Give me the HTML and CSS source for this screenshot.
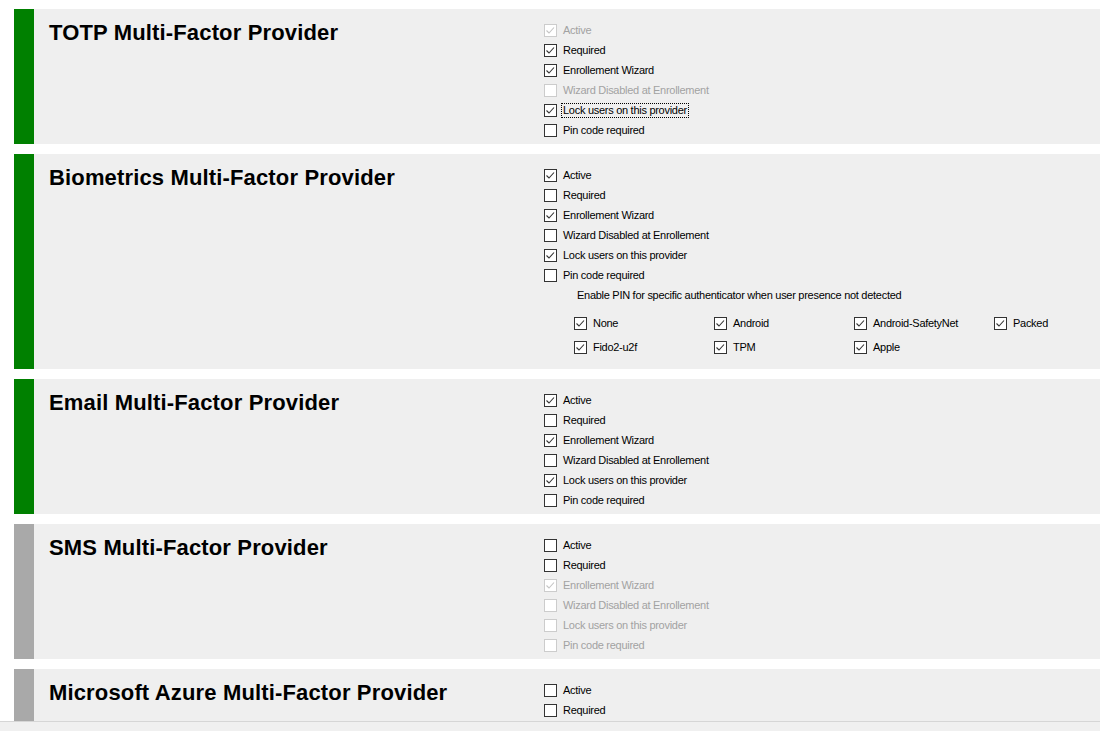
FILE: index.html
```html
<!DOCTYPE html>
<html>
<head>
<meta charset="utf-8">
<link rel="stylesheet" href="styles.css">
</head>
<body>
<div class="page">
  <div class="list">
    <section class="card">
      <div class="stripe on"></div>
      <h2 class="title">TOTP Multi-Factor Provider</h2>
      <div class="options">
        <label class="opt disabled checked"><span class="box"><svg viewBox="0 0 13 13"><polyline points="2.5,6.5 5,9 10,3.5"/></svg></span><span class="txt">Active</span></label>
        <label class="opt checked"><span class="box"><svg viewBox="0 0 13 13"><polyline points="2.5,6.5 5,9 10,3.5"/></svg></span><span class="txt">Required</span></label>
        <label class="opt checked"><span class="box"><svg viewBox="0 0 13 13"><polyline points="2.5,6.5 5,9 10,3.5"/></svg></span><span class="txt">Enrollement Wizard</span></label>
        <label class="opt disabled"><span class="box"></span><span class="txt">Wizard Disabled at Enrollement</span></label>
        <label class="opt checked"><span class="box"><svg viewBox="0 0 13 13"><polyline points="2.5,6.5 5,9 10,3.5"/></svg></span><span class="txt focus">Lock users on this provider</span></label>
        <label class="opt"><span class="box"></span><span class="txt">Pin code required</span></label>
      </div>
    </section>

    <section class="card">
      <div class="stripe on"></div>
      <h2 class="title">Biometrics Multi-Factor Provider</h2>
      <div class="options">
        <label class="opt checked"><span class="box"><svg viewBox="0 0 13 13"><polyline points="2.5,6.5 5,9 10,3.5"/></svg></span><span class="txt">Active</span></label>
        <label class="opt"><span class="box"></span><span class="txt">Required</span></label>
        <label class="opt checked"><span class="box"><svg viewBox="0 0 13 13"><polyline points="2.5,6.5 5,9 10,3.5"/></svg></span><span class="txt">Enrollement Wizard</span></label>
        <label class="opt"><span class="box"></span><span class="txt">Wizard Disabled at Enrollement</span></label>
        <label class="opt checked"><span class="box"><svg viewBox="0 0 13 13"><polyline points="2.5,6.5 5,9 10,3.5"/></svg></span><span class="txt">Lock users on this provider</span></label>
        <label class="opt"><span class="box"></span><span class="txt">Pin code required</span></label>
        <div class="pin-note">Enable PIN for specific authenticator when user presence not detected</div>
        <div class="auth-grid">
          <label class="opt checked"><span class="box"><svg viewBox="0 0 13 13"><polyline points="2.5,6.5 5,9 10,3.5"/></svg></span><span class="txt">None</span></label>
          <label class="opt checked"><span class="box"><svg viewBox="0 0 13 13"><polyline points="2.5,6.5 5,9 10,3.5"/></svg></span><span class="txt">Android</span></label>
          <label class="opt checked"><span class="box"><svg viewBox="0 0 13 13"><polyline points="2.5,6.5 5,9 10,3.5"/></svg></span><span class="txt">Android-SafetyNet</span></label>
          <label class="opt checked"><span class="box"><svg viewBox="0 0 13 13"><polyline points="2.5,6.5 5,9 10,3.5"/></svg></span><span class="txt">Packed</span></label>
          <label class="opt checked"><span class="box"><svg viewBox="0 0 13 13"><polyline points="2.5,6.5 5,9 10,3.5"/></svg></span><span class="txt">Fido2-u2f</span></label>
          <label class="opt checked"><span class="box"><svg viewBox="0 0 13 13"><polyline points="2.5,6.5 5,9 10,3.5"/></svg></span><span class="txt">TPM</span></label>
          <label class="opt checked"><span class="box"><svg viewBox="0 0 13 13"><polyline points="2.5,6.5 5,9 10,3.5"/></svg></span><span class="txt">Apple</span></label>
        </div>
      </div>
    </section>

    <section class="card">
      <div class="stripe on"></div>
      <h2 class="title">Email Multi-Factor Provider</h2>
      <div class="options">
        <label class="opt checked"><span class="box"><svg viewBox="0 0 13 13"><polyline points="2.5,6.5 5,9 10,3.5"/></svg></span><span class="txt">Active</span></label>
        <label class="opt"><span class="box"></span><span class="txt">Required</span></label>
        <label class="opt checked"><span class="box"><svg viewBox="0 0 13 13"><polyline points="2.5,6.5 5,9 10,3.5"/></svg></span><span class="txt">Enrollement Wizard</span></label>
        <label class="opt"><span class="box"></span><span class="txt">Wizard Disabled at Enrollement</span></label>
        <label class="opt checked"><span class="box"><svg viewBox="0 0 13 13"><polyline points="2.5,6.5 5,9 10,3.5"/></svg></span><span class="txt">Lock users on this provider</span></label>
        <label class="opt"><span class="box"></span><span class="txt">Pin code required</span></label>
      </div>
    </section>

    <section class="card">
      <div class="stripe off"></div>
      <h2 class="title">SMS Multi-Factor Provider</h2>
      <div class="options">
        <label class="opt"><span class="box"></span><span class="txt">Active</span></label>
        <label class="opt"><span class="box"></span><span class="txt">Required</span></label>
        <label class="opt disabled checked"><span class="box"><svg viewBox="0 0 13 13"><polyline points="2.5,6.5 5,9 10,3.5"/></svg></span><span class="txt">Enrollement Wizard</span></label>
        <label class="opt disabled"><span class="box"></span><span class="txt">Wizard Disabled at Enrollement</span></label>
        <label class="opt disabled"><span class="box"></span><span class="txt">Lock users on this provider</span></label>
        <label class="opt disabled"><span class="box"></span><span class="txt">Pin code required</span></label>
      </div>
    </section>

    <section class="card">
      <div class="stripe off"></div>
      <h2 class="title">Microsoft Azure Multi-Factor Provider</h2>
      <div class="options">
        <label class="opt"><span class="box"></span><span class="txt">Active</span></label>
        <label class="opt"><span class="box"></span><span class="txt">Required</span></label>
      </div>
    </section>
  </div>
  <div class="statusbar"></div>
</div>
</body>
</html>
```

FILE: styles.css
```css
* { box-sizing: border-box; }

html, body {
  margin: 0;
  padding: 0;
  background: #ffffff;
  font-family: "Liberation Sans", Arial, sans-serif;
  color: #000;
}

.page {
  height: 731px;
  display: flex;
  flex-direction: column;
  overflow: hidden;
}

.list {
  height: 721px;
  flex: none;
  overflow: hidden;
  padding-top: 9px;
  padding-left: 14px;
  display: flex;
  flex-direction: column;
  gap: 10px;
}

.statusbar {
  flex: 1;
  background: #f0f0f0;
  border-top: 1px solid #d6d6d6;
}

.card {
  display: flex;
  background: #efefef;
  flex: none;
  padding-bottom: 4px;
}

.stripe {
  width: 20px;
  flex: none;
  margin-bottom: -4px;
}
.stripe.on { background: #008000; }
.stripe.off { background: #a9a9a9; }

.title {
  width: 510px;
  flex: none;
  margin: 0;
  padding: 12px 0 0 15px;
  font-size: 22px;
  line-height: 24px;
  font-weight: bold;
  letter-spacing: 0.15px;
  color: #000;
}

.options {
  padding-top: 11px;
  display: flex;
  flex-direction: column;
}

.opt {
  display: flex;
  align-items: center;
  height: 20px;
  font-size: 11px;
  letter-spacing: -0.28px;
  white-space: nowrap;
}

.box {
  width: 13px;
  height: 13px;
  border: 1px solid #333333;
  background: #ffffff;
  flex: none;
  margin-right: 6px;
  position: relative;
}

.box svg {
  position: absolute;
  left: -1px;
  top: -1px;
  width: 13px;
  height: 13px;
}

.box polyline {
  fill: none;
  stroke: #333333;
  stroke-width: 1.1;
}

.opt.disabled .txt { color: #a2a2a2; }
.opt.disabled .box { border-color: #cccccc; }
.opt.disabled .box polyline { stroke: #c4c4c4; }

.txt.focus {
  outline: 1px dotted #000;
  outline-offset: 0;
  padding: 0 1px;
  margin-left: -1px;
  line-height: 13px;
}

.pin-note {
  height: 20px;
  display: flex;
  align-items: center;
  padding-left: 33px;
  font-size: 11px;
  letter-spacing: -0.28px;
  white-space: nowrap;
}

.auth-grid {
  display: grid;
  grid-template-columns: repeat(4, 140px);
  grid-auto-rows: 24px;
  padding-left: 30px;
  margin-top: 6px;
  margin-bottom: 6px;
}

.auth-grid .opt { height: 24px; }
```
